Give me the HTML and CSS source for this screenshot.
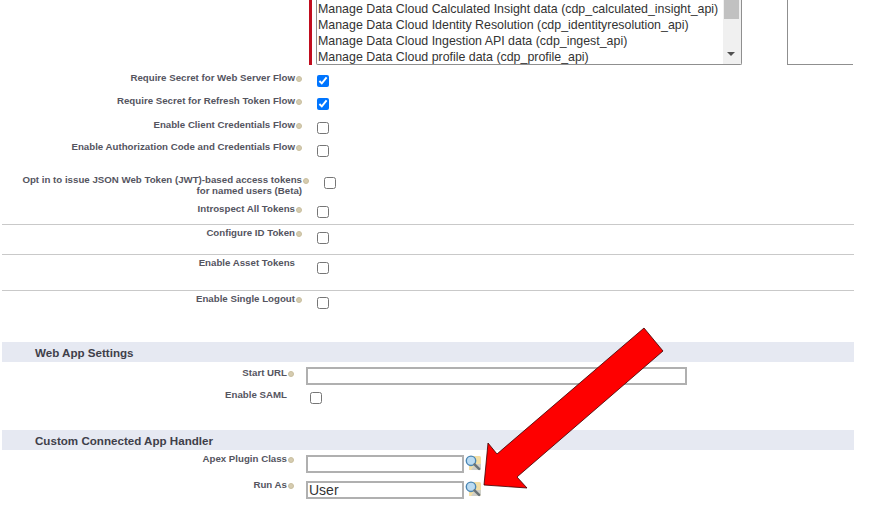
FILE: index.html
```html
<!DOCTYPE html>
<html lang="en">
<head>
<meta charset="utf-8">
<title>Connected App Settings</title>
<link rel="stylesheet" href="styles.css">
</head>
<body>
<main class="page">
  <section class="scopes">
    <span class="req-bar"></span>
    <div class="listbox">
      <ul class="options">
        <li>Manage Data Cloud Calculated Insight data (cdp_calculated_insight_api)</li>
        <li>Manage Data Cloud Identity Resolution (cdp_identityresolution_api)</li>
        <li>Manage Data Cloud Ingestion API data (cdp_ingest_api)</li>
        <li>Manage Data Cloud profile data (cdp_profile_api)</li>
      </ul>
      <div class="scrollbar"><span class="thumb"></span><span class="sb-arrow"></span></div>
    </div>
    <div class="selected-box"></div>
  </section>

  <div class="row h23"><label class="lab">Require Secret for Web Server Flow<i class="help"></i></label><input class="cb" type="checkbox" checked></div>
  <div class="row h24"><label class="lab">Require Secret for Refresh Token Flow<i class="help"></i></label><input class="cb" type="checkbox" checked></div>
  <div class="row h22"><label class="lab">Enable Client Credentials Flow<i class="help"></i></label><input class="cb" type="checkbox"></div>
  <div class="row h33"><label class="lab">Enable Authorization Code and Credentials Flow<i class="help"></i></label><input class="cb low" type="checkbox"></div>
  <div class="row h29"><label class="lab wide">Opt in to issue JSON Web Token (JWT)-based access tokens<i class="help"></i><br>for named users (Beta)<i class="help blank"></i></label><input class="cb" type="checkbox"></div>
  <div class="row h24"><label class="lab">Introspect All Tokens<i class="help"></i></label><input class="cb" type="checkbox"></div>
  <div class="row h30 ruled"><label class="lab">Configure ID Token<i class="help"></i></label><input class="cb low" type="checkbox"></div>
  <div class="row h36 ruled"><label class="lab">Enable Asset Tokens<i class="help blank"></i></label><input class="cb low" type="checkbox"></div>
  <div class="row h52 ruled"><label class="lab">Enable Single Logout<i class="help"></i></label><input class="cb" type="checkbox"></div>

  <h2 class="band">Web App Settings</h2>
  <div class="row h22 web"><label class="lab short">Start URL<i class="help"></i></label><input class="text url" type="text"></div>
  <div class="row h46 web"><label class="lab short">Enable SAML<i class="help blank"></i></label><input class="cb saml" type="checkbox"></div>

  <h2 class="band">Custom Connected App Handler</h2>
  <div class="row h26"><label class="lab short">Apex Plugin Class<i class="help"></i></label><input class="text lookup" type="text"><svg class="lens" viewBox="0 0 16 16" aria-hidden="true"><path d="M4 1h10.5q1.5 0 1.5 1.5v11q0 1.5-1.5 1.5H4z" fill="#f3dfa6"/><path d="M10 9h6v4.5q0 1.5-1.5 1.5H6z" fill="#cfcfc8"/><circle cx="6" cy="5.8" r="4.7" fill="#bcdcf2" stroke="#4a86b4" stroke-width="1.4"/><path d="M9.5 9.3l4.6 4.6" stroke="#6a7377" stroke-width="2.4" stroke-linecap="round"/></svg></div>
  <div class="row h26"><label class="lab short">Run As<i class="help"></i></label><input class="text lookup user" type="text" value="User"><svg class="lens" viewBox="0 0 16 16" aria-hidden="true"><path d="M4 1h10.5q1.5 0 1.5 1.5v11q0 1.5-1.5 1.5H4z" fill="#f3dfa6"/><path d="M10 9h6v4.5q0 1.5-1.5 1.5H6z" fill="#cfcfc8"/><circle cx="6" cy="5.8" r="4.7" fill="#bcdcf2" stroke="#4a86b4" stroke-width="1.4"/><path d="M9.5 9.3l4.6 4.6" stroke="#6a7377" stroke-width="2.4" stroke-linecap="round"/></svg></div>

  <svg class="arrow" viewBox="0 0 885 510" aria-hidden="true"><polygon points="644,328 663,351 517,477 527,488 484,485 488,443 497,454" fill="#fe0000" stroke="#3a0000" stroke-width="0.8"/></svg>
</main>
</body>
</html>
```
FILE: styles.css
```css
* { box-sizing: border-box; }
html, body { margin: 0; padding: 0; background: #fff; }
body { width: 885px; height: 510px; overflow: hidden; font-family: "Liberation Sans", Arial, sans-serif; }
.page { width: 885px; height: 510px; padding-left: 2px; overflow: hidden; }

.scopes { display: flex; align-items: flex-end; height: 65px; margin-bottom: 4px; width: 852px; overflow: hidden; padding-left: 307px; }
.req-bar { width: 3px; height: 70px; background: #c00d1e; flex: none; }
.listbox { display: flex; justify-content: space-between; align-items: flex-end; width: 426px; height: 70px; margin-left: 4px; border: 1px solid #8f8f8f; border-top: 0; border-radius: 0 0 2px 2px; flex: none; overflow: hidden; }
.options { list-style: none; margin: 0 0 -1px; padding: 0 0 0 1px; color: #333; font-size: 12.4px; line-height: 16px; }
.options li { white-space: nowrap; }
.scrollbar { position: relative; width: 18px; height: 100%; background: #f0f0f0; flex: none; }
.thumb { display: block; position: absolute; left: 1px; right: 2px; bottom: 45px; height: 25px; background: #c1c1c1; }
.sb-arrow { position: absolute; left: 4px; bottom: 8px; border: 4px solid transparent; border-bottom: 0; border-top: 4px solid #505050; }
.selected-box { width: 66px; height: 70px; margin-left: 45px; border-left: 1px solid #8f8f8f; border-bottom: 1px solid #8f8f8f; flex: none; }

.row { display: flex; align-items: flex-start; width: 852px; }
.ruled { border-top: 1px solid #c9c9c9; }
.h22 { height: 22px; } .h23 { height: 23px; } .h24 { height: 24px; } .h26 { height: 26px; }
.h29 { height: 29px; } .h30 { height: 30px; } .h33 { height: 33px; } .h36 { height: 36px; }
.h46 { height: 46px; } .h52 { height: 52px; }

.lab { flex: none; width: 300px; margin-top: 3px; text-align: right; color: #55555f; font-size: 9.7px; font-weight: 700; line-height: 12px; }
.ruled .lab { margin-top: 2px; }
.web .lab { margin-top: 5px; }
.lab.wide { width: 307px; line-height: 11px; }
.lab.short { width: 292px; }
.help { display: inline-block; width: 6px; height: 6px; margin-left: 1px; border-radius: 50%; background: #d6ccb0; border: 1px solid #c9bf9f; vertical-align: -0.5px; }
.help.blank { visibility: hidden; }

.cb { flex: none; width: 12px; height: 12px; margin: 6px 0 0 15px; accent-color: #0075ff; }
.cb.low { margin-top: 7px; }
.cb.saml { margin: 8px 0 0 16px; }

.band { display: flex; align-items: center; width: 852px; height: 20px; margin: 0; padding-left: 33px; background: #e6e9f2; color: #3f3f4a; font-size: 11.6px; font-weight: 700; }

.text { flex: none; height: 18px; margin: 5px 0 0 12px; padding: 0 1px; border: 2px solid #b0b0b0; background: #fff; font: 14px "Liberation Sans", Arial, sans-serif; color: #333; border-radius: 0; outline: 0; }
.url { width: 381px; }
.lookup { width: 158px; }
.lens { flex: none; width: 16px; height: 16px; margin: 5px 0 0 1px; }

.arrow { position: absolute; left: 0; top: 0; width: 885px; height: 510px; pointer-events: none; }
```
